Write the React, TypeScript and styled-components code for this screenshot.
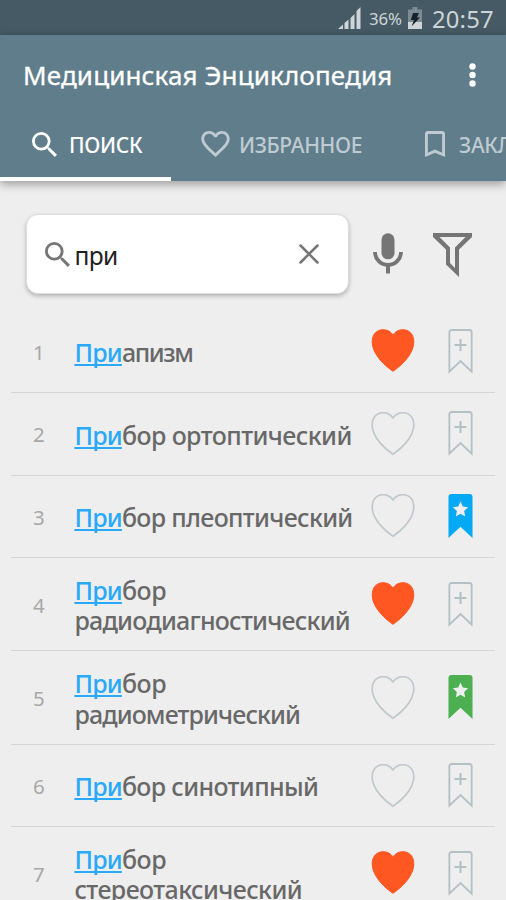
import React from "react";
import styled, { createGlobalStyle } from "styled-components";

const GlobalStyle = createGlobalStyle`
  * { box-sizing: border-box; }
  html, body { margin: 0; padding: 0; background: #eeeeee; }
  body { font-family: "Noto Sans", "Open Sans", sans-serif; overflow: hidden; }
  svg { display: block; flex: none; }
`;

const Screen = styled.div`
  width: 506px;
  height: 900px;
  overflow: hidden;
  background: #eeeeee;
  display: flex;
  flex-direction: column;
`;

const StatusBar = styled.div`
  height: 35px;
  flex: none;
  background: #455a64;
  display: flex;
  align-items: center;
  justify-content: flex-end;
  padding-right: 13px;
  color: #ced4d7;
`;

const BatteryPercent = styled.span`
  width: 34px;
  margin: 2px 5px 0 8px;
  font-size: 16.8px;
  line-height: 20px;
  letter-spacing: -0.1px;
  white-space: nowrap;
`;

const Clock = styled.span`
  width: 61px;
  margin: 2px 0 0 10px;
  font-size: 23.8px;
  line-height: 30px;
  letter-spacing: 0.2px;
  white-space: nowrap;
`;

const Header = styled.header`
  height: 146px;
  flex: none;
  background: #607d8b;
  box-shadow: 0 3px 9px rgba(0, 0, 0, 0.36);
  display: flex;
  flex-direction: column;
  z-index: 1;
`;

const AppBar = styled.div`
  height: 76px;
  flex: none;
  display: flex;
  align-items: center;
  justify-content: space-between;
  padding: 4px 30px 0 23px;
`;

const AppTitle = styled.h1`
  margin: 0;
  font-size: 26px;
  line-height: 34px;
  font-weight: 400;
  color: #ffffff;
  white-space: nowrap;
  letter-spacing: 0.14px;
  -webkit-text-stroke: 0.3px #ffffff;
`;

const Tabs = styled.nav`
  flex: 1;
  display: flex;
  overflow: hidden;
`;

const Tab = styled.div<{ $active?: boolean; $width: number; $gap: number }>`
  flex: none;
  width: ${(p) => p.$width}px;
  padding: 0 0 4px ${(p) => (p.$active ? 32 : 30.5)}px;
  display: flex;
  align-items: center;
  gap: ${(p) => p.$gap}px;
  color: ${(p) => (p.$active ? "#ffffff" : "#bfcbd1")};
  box-shadow: ${(p) => (p.$active ? "inset 0 -4px 0 #ffffff" : "none")};
`;

const TabLabel = styled.span<{ $spacing: number }>`
  font-size: 21px;
  line-height: 28px;
  font-weight: 500;
  padding-top: 2px;
  letter-spacing: ${(p) => p.$spacing}px;
  white-space: nowrap;
`;

const SearchRow = styled.div`
  flex: none;
  height: 129.5px;
  padding: 33px 33px 0 26px;
  display: flex;
  align-items: flex-start;
  color: #757575;
`;

const SearchBox = styled.div`
  width: 323px;
  height: 80px;
  padding: 0 29px 0 18px;
  border-radius: 12px;
  border: 1px solid #dedede;
  background: #ffffff;
  box-shadow: 0 2px 4px rgba(0, 0, 0, 0.26);
  display: flex;
  align-items: center;
`;

const Query = styled.span`
  flex: 1;
  margin-left: 4.5px;
  padding-top: 3px;
  color: #212121;
  font-size: 24.5px;
  line-height: 34px;
  letter-spacing: -0.6px;
`;

const SearchAction = styled.div<{ $left: number; $top: number }>`
  margin: ${(p) => p.$top}px 0 0 ${(p) => p.$left}px;
`;

const List = styled.div`
  flex: none;
  padding: 0 11px;
`;

const Row = styled.div<{ $tall: boolean }>`
  height: ${(p) => (p.$tall ? 93.4 : 82.5)}px;
  border-bottom: 1px solid #d3d5d6;
  display: grid;
  grid-template-columns: 63px 297px 1fr 25px;
  align-items: center;
  padding-right: 22px;
`;

const RowNumber = styled.span`
  padding: 1px 0 0 22px;
  color: #a8a8a8;
  font-size: 20.5px;
  font-weight: 400;
  line-height: 28px;
`;

const RowTitle = styled.div`
  padding: 2px 0 0 0.4px;
  color: #686868;
  font-size: 25px;
  line-height: 30.5px;
  font-weight: 500;
  white-space: nowrap;
`;

const Line = styled.div<{ $spacing: number }>`
  letter-spacing: ${(p) => p.$spacing}px;
`;

const Match = styled.span`
  color: #29a9fb;
  letter-spacing: -0.8px;
  text-decoration: underline;
  text-decoration-thickness: 1.5px;
  text-underline-offset: 2px;
  text-decoration-skip-ink: none;
`;

const SignalIcon = () => (
  <svg width="23" height="22" viewBox="0 0 23 22" fill="#ced4d7">
    <path d="M0 22 5 17.5V22zM6.500 16 10.500 12.500V22h-4zM12.500 11 16.500 7V22h-4zM18.500 4 22.500 0V22h-4z" />
  </svg>
);

const BatteryIcon = () => (
  <svg width="14" height="22" viewBox="0 0 14 22">
    <path d="M4.500 0h5v2.500H14V22H0V2.500h4.500z" fill="#7d8c93" />
    <path d="M0 15h14v7H0z" fill="#ced4d7" />
    <path d="M5 6h6L9 10.500h3L3.500 19.500 6 13H2.800z" fill="#17232a" />
  </svg>
);

const MoreIcon = () => (
  <svg width="7" height="24" viewBox="0 0 7 24" fill="#ffffff">
    <circle cx="3.500" cy="3.500" r="3.200" />
    <circle cx="3.500" cy="12" r="3.200" />
    <circle cx="3.500" cy="20.500" r="3.200" />
  </svg>
);

const SearchIcon = () => (
  <svg width="25" height="25" viewBox="3 3 17.500 17.500" fill="currentColor">
    <path d="M15.500 14h-.79l-.28-.27A6.471 6.471 0 0 0 16 9.500 6.500 6.500 0 1 0 9.500 16c1.610 0 3.090-.59 4.230-1.570l.27.28v.79l5 4.990L20.490 19l-4.990-5zm-6 0C7.010 14 5 11.990 5 9.500S7.010 5 9.500 5 14 7.010 14 9.500 11.990 14 9.500 14z" />
  </svg>
);

const TabHeartIcon = () => (
  <svg width="29" height="26" viewBox="2 3 20 18.350" fill="currentColor">
    <path d="M16.500 3c-1.740 0-3.410.81-4.500 2.090C10.910 3.810 9.240 3 7.500 3 4.420 3 2 5.420 2 8.500c0 3.780 3.400 6.860 8.550 11.540L12 21.350l1.450-1.320C18.600 15.360 22 12.280 22 8.500 22 5.420 19.580 3 16.500 3zm-4.400 15.550-.1.100-.1-.1C7.140 14.240 4 11.390 4 8.500 4 6.500 5.500 5 7.500 5c1.540 0 3.040.99 3.570 2.360h1.870C13.460 5.990 14.960 5 16.500 5c2 0 3.500 1.500 3.500 3.500 0 2.890-3.140 5.740-7.900 10.050z" />
  </svg>
);

const TabBookmarkIcon = () => (
  <svg width="20" height="26" viewBox="5 3 14 18" fill="currentColor" preserveAspectRatio="none">
    <path d="M17 3H7c-1.100 0-2 .9-2 2v16l7-3 7 3V5c0-1.100-.9-2-2-2zm0 15-5-2.180L7 18V5h10v13z" />
  </svg>
);

const ClearIcon = () => (
  <svg width="20" height="20" viewBox="0 0 20 20" stroke="#757575" strokeWidth="2.500" strokeLinecap="round">
    <path d="M1.500 1.500 18.500 18.500M18.500 1.500 1.500 18.500" />
  </svg>
);

const MicIcon = () => (
  <svg width="30" height="41" viewBox="0 0 30 41">
    <rect x="8.500" y="0.300" width="13" height="26" rx="6.500" fill="currentColor" />
    <path d="M2 19a13 13 0 0 0 26 0" fill="none" stroke="currentColor" strokeWidth="3.800" />
    <path d="M13 31h4v9.500h-4z" fill="currentColor" />
  </svg>
);

const FilterIcon = () => (
  <svg width="39" height="44" viewBox="0 0 39 44" fill="currentColor" fillRule="evenodd">
    <path d="M0 0h39v4L26 16.500V44L13 31.500V16.500L0 4zM6.500 4 17 14.500V30l5 5V14.500L32.500 4z" />
  </svg>
);

const HeartIcon = ({ filled }: { filled: boolean }) => (
  <svg width="44" height="44" viewBox="0 0.500 44 44">
    <path
      d="M22 42.800C15.500 38.500 1.200 26.500 1.200 13.500C1.200 6 5.500 1.200 12 1.200C16.500 1.200 19.500 3 22 6.400C24.500 3 27.500 1.200 32 1.200C38.500 1.200 42.800 6 42.800 13.500C42.800 26.500 28.500 38.500 22 42.800Z"
      fill={filled ? "#ff5722" : "none"}
      stroke={filled ? "#ff5722" : "#c0c9cd"}
      strokeWidth={filled ? 1 : 1.7}
    />
  </svg>
);

const BookmarkIcon = ({ color }: { color?: string }) =>
  color ? (
    <svg width="25" height="45" viewBox="0 0.400 26 46" preserveAspectRatio="none">
      <path d="M3.500 0.500h19a3 3 0 0 1 3 3V45.500L13 34 0.500 45.500V3.500a3 3 0 0 1 3-3z" fill={color} />
      <path d="M13 8l2.400 5.200 5.600.7-4.200 3.800 1.100 5.700-4.900-2.800-4.900 2.800 1.100-5.700L5 13.900l5.600-.7z" fill="#eeeeee" />
    </svg>
  ) : (
    <svg width="25" height="45" viewBox="0 0.400 26 46" fill="none" stroke="#b3c0c6" preserveAspectRatio="none">
      <path d="M3.800 1.400h18.400a2.400 2.400 0 0 1 2.400 2.400V44L13 33.200 1.400 44V3.800a2.400 2.400 0 0 1 2.400-2.400z" strokeWidth="1.900" />
      <path d="M13 10.500V23M6.800 16.700h12.400" strokeWidth="2.100" />
    </svg>
  );

type Entry = {
  first: string;
  firstSpacing: number;
  second?: string;
  secondSpacing?: number;
  liked?: boolean;
  mark?: string;
};

const entries: Entry[] = [
  { first: "апизм", firstSpacing: -1.4, liked: true },
  { first: "бор ортоптический", firstSpacing: -0.58 },
  { first: "бор плеоптический", firstSpacing: -0.68, mark: "#03a9f4" },
  { first: "бор", firstSpacing: -0.4, second: "радиодиагностический", secondSpacing: -0.77, liked: true },
  { first: "бор", firstSpacing: -0.4, second: "радиометрический", secondSpacing: -0.9, mark: "#4caf50" },
  { first: "бор синотипный", firstSpacing: -0.66 },
  { first: "бор", firstSpacing: -0.4, second: "стереотаксический", secondSpacing: -0.6, liked: true },
];

export default function App() {
  return (
    <Screen>
      <GlobalStyle />
      <StatusBar>
        <SignalIcon />
        <BatteryPercent>36%</BatteryPercent>
        <BatteryIcon />
        <Clock>20:57</Clock>
      </StatusBar>
      <Header>
        <AppBar>
          <AppTitle>Медицинская Энциклопедия</AppTitle>
          <MoreIcon />
        </AppBar>
        <Tabs>
          <Tab $active $width={170.5} $gap={12}>
            <SearchIcon />
            <TabLabel $spacing={-0.3}>ПОИСК</TabLabel>
          </Tab>
          <Tab $width={224} $gap={9}>
            <TabHeartIcon />
            <TabLabel $spacing={-0.35}>ИЗБРАННОЕ</TabLabel>
          </Tab>
          <Tab $width={200} $gap={14}>
            <TabBookmarkIcon />
            <TabLabel $spacing={-0.3}>ЗАКЛАДКИ</TabLabel>
          </Tab>
        </Tabs>
      </Header>
      <SearchRow>
        <SearchBox>
          <SearchIcon />
          <Query>при</Query>
          <ClearIcon />
        </SearchBox>
        <SearchAction $left={24} $top={19}>
          <MicIcon />
        </SearchAction>
        <SearchAction $left={30} $top={19}>
          <FilterIcon />
        </SearchAction>
      </SearchRow>
      <List>
        {entries.map((entry, index) => (
          <Row key={index} $tall={Boolean(entry.second)}>
            <RowNumber>{index + 1}</RowNumber>
            <RowTitle>
              <Line $spacing={entry.firstSpacing}>
                <Match>При</Match>
                {entry.first}
              </Line>
              {entry.second && <Line $spacing={entry.secondSpacing ?? 0}>{entry.second}</Line>}
            </RowTitle>
            <HeartIcon filled={Boolean(entry.liked)} />
            <BookmarkIcon color={entry.mark} />
          </Row>
        ))}
      </List>
    </Screen>
  );
}
